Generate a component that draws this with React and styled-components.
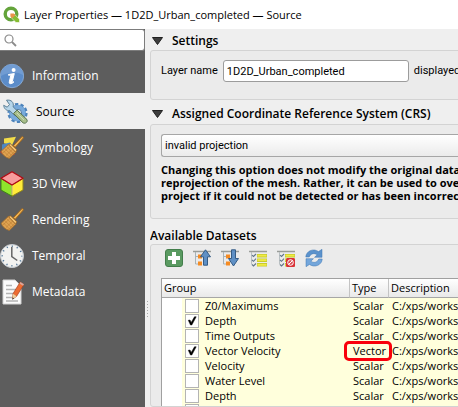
import React from "react";
import styled, { createGlobalStyle, css } from "styled-components";

const GlobalStyle = createGlobalStyle`
  *, *::before, *::after { box-sizing: border-box; }
  html, body { margin: 0; height: 100%; overflow: hidden; }
  body {
    background: #efefef;
    color: #000;
    font: 11px/16px "Open Sans", "Noto Sans", sans-serif;
  }
  svg { display: block; flex: none; }
`;

const Window = styled.div`
  display: flex;
  flex-direction: column;
  height: 100vh;
  overflow: hidden;
`;

const TitleBar = styled.header`
  display: flex;
  align-items: center;
  gap: 4px;
  flex: none;
  height: 29px;
  padding: 0 3px;
  background: #fff;
  white-space: nowrap;
`;

const Title = styled.h1`
  margin: 0;
  font-size: 11px;
  font-weight: 400;
`;

const Body = styled.div`
  display: grid;
  grid-template-columns: 145px 5px minmax(0, 1fr);
  flex: 1;
  min-height: 0;
`;

const Sidebar = styled.aside`
  background: #5d5d5d;
  overflow: hidden;
`;

const SearchBox = styled.label`
  display: flex;
  align-items: center;
  height: 22px;
  padding: 0 4px;
  gap: 4px;
  background: #fff;
  border: 1px solid #7c7c7c;
  border-left: 0;
  border-radius: 0 3px 3px 0;
`;

const SearchInput = styled.input`
  flex: 1;
  min-width: 0;
  padding: 0;
  border: 0;
  outline: 0;
  background: transparent;
  font: inherit;
`;

const Nav = styled.nav`
  display: flex;
  flex-direction: column;
  padding-top: 6px;
`;

const NavItem = styled.button`
  display: flex;
  align-items: center;
  gap: 8px;
  height: 36px;
  padding: 2px 0 0;
  border: 0;
  background: transparent;
  color: #fff;
  font: 12px/16px "Open Sans", "Noto Sans", sans-serif;
  text-align: left;
  ${(p) => p.$active && css`
    padding-left: 3px;
    background: #efefef;
    color: #000;
  `}
`;

const Splitter = styled.div`
  display: flex;
  flex-direction: column;
  align-items: center;
  justify-content: center;
  gap: 2px;
  padding-top: 182px;
`;

const Dot = styled.i`
  width: 1px;
  height: 1px;
  background: #a8a8a8;
`;

const Content = styled.main`
  display: flex;
  flex-direction: column;
  min-width: 0;
  overflow: hidden;
  white-space: nowrap;
`;

const SectionTitle = styled.h2`
  display: flex;
  align-items: center;
  gap: 9px;
  flex: none;
  height: ${(p) => p.$height}px;
  margin: 0;
  padding-left: ${(p) => (p.$plain ? 0 : 2)}px;
  padding-top: ${(p) => (p.$plain ? 8 : 3)}px;
  font-size: 12px;
  line-height: 16px;
  font-weight: 600;
`;

const Group = styled.section`
  flex: none;
  padding: ${(p) => p.$pad};
  margin-right: -8px;
  background: #ebebeb;
  border: 1px solid #d3d3d3;
  border-radius: 3px;
`;

const TableGroup = styled(Group)`
  display: flex;
  flex-direction: column;
  flex: 1;
  min-height: 0;
`;

const Field = styled.div`
  display: flex;
  align-items: center;
  gap: 5px;
  font: 11px/16px Roboto, "Open Sans", sans-serif;
`;

const TextInput = styled.input`
  flex: none;
  width: 186px;
  height: 22px;
  padding: 0 3px;
  border: 1px solid #9c9c9c;
  border-radius: 3px;
  background: #fff;
  font: 11px/16px Roboto, "Open Sans", sans-serif;
`;

const Select = styled.select`
  appearance: none;
  display: block;
  width: 100%;
  height: 23px;
  padding: 0 3px;
  border: 1px solid #a6a6a6;
  border-right: 0;
  border-radius: 3px 0 0 3px;
  background: linear-gradient(#fff, #ebebeb);
  color: #000;
  font: 11px/16px Roboto, "Open Sans", sans-serif;
`;

const Note = styled.p`
  margin: 6px 0 0;
  font-size: 11px;
  line-height: 13px;
  font-weight: 700;
`;

const Toolbar = styled.div`
  display: flex;
  gap: 10px;
  padding: 4px 4px 11px;
`;

const ToolButton = styled.button`
  width: 18px;
  height: 18px;
  padding: 0;
  border: 0;
  background: transparent;
`;

const TableFrame = styled.div`
  flex: 1;
  min-height: 0;
  overflow: hidden;
  background: #fff;
  border: 1px solid #a0a0a0;
  border-bottom: 0;
`;

const Table = styled.table`
  width: 100%;
  table-layout: fixed;
  border-collapse: separate;
  border-spacing: 0;
`;

const Col = styled.col`
  width: ${(p) => p.$width};
`;

const HeadCell = styled.th`
  height: 19px;
  padding: 0 2px;
  background: linear-gradient(#fff, #e9e9e9);
  border-bottom: 1px solid #a6a6a6;
  border-left: ${(p) => (p.$first ? "0" : "1px solid #c4c4c4")};
  font-weight: 400;
  line-height: 16px;
  text-align: left;
`;

const Cell = styled.td`
  position: relative;
  height: 15px;
  padding: 0 0 0 4px;
  background: #ffffdc;
  line-height: 15px;
`;

const Indent = styled.td`
  padding: 0;
  background: #fff;
`;

const CheckLabel = styled.label`
  display: flex;
  align-items: center;
  gap: 6px;
  height: 15px;
  margin-left: -1px;
`;

const CheckHolder = styled.span`
  display: grid;
  flex: none;
  > * { grid-area: 1 / 1; }
  > svg { pointer-events: none; }
`;

const Check = styled.input`
  appearance: none;
  width: 14px;
  height: 14px;
  margin: 0;
  background: #fff;
  border: 1px solid #b4b4b4;
`;

const RedMark = styled.span`
  position: absolute;
  inset: -2px -4px -3px -5px;
  z-index: 1;
  border: 3px solid #f9000c;
  border-radius: 5px;
  pointer-events: none;
`;

const QgisLogo = () => (
  <svg width="17" height="17" viewBox="0 0 17 17">
    <circle cx="8" cy="8" r="5.8" fill="none" stroke="#64a43b" strokeWidth="3.4" />
    <path d="M8 8h3.2l5.3 5.2v3.3h-3.6L8 11.4z" fill="#86bc32" stroke="#fff" strokeWidth=".6" />
    <path d="M7.4 7.4h3.4L12.6 9l-3.4 3.2-1.8-1.8z" fill="#e8924a" />
  </svg>
);

const SearchIcon = () => (
  <svg width="13" height="13" viewBox="0 0 13 13" fill="none" stroke="#8b8b8b">
    <circle cx="5" cy="5" r="4" strokeWidth="1.2" />
    <path d="M8 8l4 4" strokeWidth="1.8" />
  </svg>
);

const InfoIcon = () => (
  <svg width="24" height="26" viewBox="0 0 24 26">
    <circle cx="12" cy="13" r="11.7" fill="#5b8cc9" stroke="#8fb2dd" strokeWidth=".8" />
    <path d="M1 13a11 11 0 0122-1c-6-4-15-3-22 1z" fill="#719cd2" />
    <circle cx="13.6" cy="7" r="2" fill="#fff" />
    <path d="M8.5 11.5l5.8-1-2 8c-.3 1.2.4 1 1.7.2-1.4 2-5.3 3.1-4.7.2l1.4-6c.1-.8-.8-.7-2.2-.7z" fill="#fff" stroke="#fff" strokeWidth="1" />
  </svg>
);

const SourceIcon = () => (
  <svg width="25" height="26" viewBox="0 0 25 26">
    <circle cx="14.5" cy="14" r="8.6" fill="#78aadb" stroke="#4d83bb" strokeWidth="3" strokeDasharray="3.2 2.2" />
    <circle cx="14.5" cy="14" r="8" fill="#78aadb" />
    <circle cx="15" cy="14" r="3.6" fill="#e6eef5" stroke="#557ca1" />
    <path d="M3.5 1.2c5-.8 7.7 2.4 6.6 6.6l5.4 5.2-3.7 3.6-5.1-5C3.7 12 .9 9.7 .7 6.3l3.5 1.9 2.3-2.7z" fill="#b7d6ea" stroke="#5d8097" />
    <path d="M10.5 14.5l3.6-3.4L24 20.6c1 2.7-2 4.5-4 3.2z" fill="#a9bf8b" stroke="#55704c" />
    <path d="M14 14l7 7" stroke="#cddab5" />
  </svg>
);

const Brush = () => (
  <g>
    <path d="M13.4 10.7L22.2 1.4l1.3 1.4-8.3 9.5z" fill="#eeb254" stroke="#a4691c" />
    <path d="M8.3 9.6l2.3-.7 6 5.7-.9 2.7z" fill="#f6c674" stroke="#9d6522" strokeWidth=".8" />
    <path d="M8.3 9.6l7.4 7.7-6.5 6.1c-4.3-1.2-7-4-8-7.2z" fill="#dfa351" stroke="#a66d2a" strokeWidth=".8" />
    <path d="M3 15.5l7 7M5 13.8l6.5 6.6M7 12l6.5 6.8M3 18l7-6.7M6 20.5l7-6.7M8.3 22.5l6.4-6" stroke="#b7772f" strokeWidth=".5" />
  </g>
);

const SymbologyIcon = () => (
  <svg width="24" height="26" viewBox="0 0 24 26">
    <path d="M4 3.5l12-1.7-4 8.5-8-2z" fill="#f2dc49" />
    <path d="M2 9.5l8-2 3 5-11 3.3z" fill="#4c88c7" />
    <path d="M0 17l6-4 9 7-12-.5z" fill="#e53430" />
    <Brush />
  </svg>
);

const CubeIcon = () => (
  <svg width="24" height="26" viewBox="0 0 24 26" strokeLinejoin="round">
    <path d="M1 7.5l11 6.5v11.2L1 19z" fill="#8fe52c" stroke="#3d8417" />
    <path d="M23 7.5L12 14v11.2L23 19z" fill="#ffeb3a" stroke="#8f8419" />
    <path d="M12 .8l11 6.4L12 14 1 7.2z" fill="#f79c9c" stroke="#b10912" strokeWidth="1.3" />
    <path d="M12 14.5V24" stroke="#fff5b0" strokeWidth=".8" />
  </svg>
);

const RenderingIcon = () => (
  <svg width="24" height="26" viewBox="0 0 24 26"><Brush /></svg>
);

const ClockIcon = () => (
  <svg width="24" height="26" viewBox="0 0 24 26" fill="none">
    <circle cx="12" cy="13" r="11.5" fill="#f3f3f1" stroke="#c8ced4" />
    <circle cx="12" cy="13" r="9.8" stroke="#56799a" strokeWidth="1.6" strokeDasharray="1.2 3.93" strokeDashoffset=".6" />
    <path d="M11.8 4v9.5l5.5 4" stroke="#666" strokeWidth="1.5" />
  </svg>
);

const MetadataIcon = () => (
  <svg width="24" height="26" viewBox="0 0 24 26">
    <path d="M3 1h12l6 6v18H3z" fill="#fbfbfb" stroke="#d1d1d1" />
    <path d="M6 6.5h6M6 10.5h10M6 14.5h9M6 18.5h9M6 22h12" stroke="#b4b4b4" strokeWidth="1.4" />
    <path d="M20.2 3l3.7 2.5-7.3 11.8-3.9 2.6.3-5.2z" fill="#ed6c32" stroke="#a6411f" strokeWidth=".7" />
    <path d="M19.5 4.5l3.5 2.3 1-1.5L20.5 3z" fill="#d6a8a0" />
    <path d="M13 14.7l3.6 2.6-4 3z" fill="#ecd09b" />
    <path d="M12.7 18.5l1.4 1-1.8 1.2z" fill="#333" />
  </svg>
);

const Arrow = () => (
  <svg width="11" height="8" viewBox="0 0 11 8">
    <path d="M.5 .5h10L5.5 7.5z" fill="#3d3d3d" stroke="#202020" strokeLinejoin="round" />
  </svg>
);

const AddIcon = () => (
  <svg width="18" height="18" viewBox="0 0 18 18">
    <rect x=".5" y=".5" width="17" height="17" rx="2.5" fill="#5a9a61" stroke="#437e4b" />
    <path d="M9 3v12M3 9h12" stroke="#fff" strokeWidth="4" />
  </svg>
);

const TreeArrowIcon = ({ down }) => (
  <svg width="18" height="18" viewBox="0 0 18 18">
    <path d="M0 2.5h18" stroke="#999c98" strokeWidth="1.5" />
    <path d="M2.5 3v12H6M2.5 7.5H6" stroke="#a7b3b9" fill="none" />
    <path d="M5 5.5h4v4H5zM5 12.5h4v4H5z" fill="#f58b22" />
    <path d={down ? "M10.5 .8h4v8.7h3L12.5 17l-5-7.5h3z" : "M12.5 .8l5 7h-3v8.4h-4V7.8h-3z"} fill="#5f90c5" stroke="#355c85" strokeLinejoin="round" />
  </svg>
);

const ListIcon = ({ off }) => (
  <svg width="18" height="18" viewBox="0 0 18 18" fill="none">
    <path d="M0 2.5h18" stroke="#999c98" strokeWidth="1.5" />
    <path d="M2.5 3v12.5" stroke="#b8bfc2" />
    <path d="M3 6.2l1.5 1.3L7 5M3 11l1.5 1.3L7 9.7M3 15.5L4.5 17 7 14.5" stroke="#627689" strokeWidth="1.1" />
    <path d="M8 6.7h10M8 11.2h10M8 15.8h10" stroke="#c9cb2e" strokeWidth="3.4" />
    <path d="M8.5 6.7h9M8.5 11.2h9M8.5 15.8h9" stroke="#f0ec43" strokeWidth="1.8" />
    {off && (
      <g>
        <rect x="9" y="9" width="9" height="9" rx="1.5" fill="#da3038" />
        <circle cx="13.5" cy="13.5" r="2.8" stroke="#fff" fill="#d95358" />
        <path d="M11.5 15.5l4-4" stroke="#fff" />
      </g>
    )}
  </svg>
);

const RefreshIcon = () => (
  <svg width="18" height="18" viewBox="0 0 18 18">
    <path d="M.8 8C1 2 8.5-1.2 13.5 2.600L17 .3v8H9.500l2.700-2.500C9 3.600 5.800 4.600 4.200 8z" fill="#5b92cc" stroke="#3f76b3" strokeWidth=".5" />
    <path d="M17.200 10c-.2 6-7.700 9.200-12.700 5.400L1 17.700v-8h7.500l-2.700 2.500c3.200 2.200 6.400 1.200 8-2.200z" fill="#73a6db" stroke="#3f76b3" strokeWidth=".5" />
  </svg>
);

const CheckMark = () => (
  <svg width="14" height="14" viewBox="0 0 14 14">
    <path d="M3.3 6.3L5 6l1.2 2.4L9.5 2.8h1.7L6.8 11H5.5z" fill="#000" stroke="#000" strokeWidth=".5" />
  </svg>
);

const navItems = [
  ["Information", InfoIcon],
  ["Source", SourceIcon],
  ["Symbology", SymbologyIcon],
  ["3D View", CubeIcon],
  ["Rendering", RenderingIcon],
  ["Temporal", ClockIcon],
  ["Metadata", MetadataIcon],
];

const tools = [
  ["Add dataset", <AddIcon />],
  ["Collapse all", <TreeArrowIcon />],
  ["Expand all", <TreeArrowIcon down />],
  ["Check all", <ListIcon />],
  ["Uncheck all", <ListIcon off />],
  ["Reset", <RefreshIcon />],
];

const rows = [
  { name: "Z0/Maximums", type: "Scalar" },
  { name: "Depth", type: "Scalar", checked: true },
  { name: "Time Outputs", type: "Scalar" },
  { name: "Vector Velocity", type: "Vector", checked: true, marked: true },
  { name: "Velocity", type: "Scalar" },
  { name: "Water Level", type: "Scalar" },
  { name: "Depth", type: "Scalar" },
  { name: "Vector Velocity", type: "Vector" },
];

export default function App() {
  return (
    <Window>
      <GlobalStyle />
      <TitleBar>
        <QgisLogo />
        <Title>Layer Properties — 1D2D_Urban_completed — Source</Title>
      </TitleBar>
      <Body>
        <Sidebar>
          <SearchBox>
            <SearchIcon />
            <SearchInput type="search" aria-label="Search" />
          </SearchBox>
          <Nav>
            {navItems.map(([name, Icon]) => (
              <NavItem key={name} type="button" $active={name === "Source"}>
                <Icon />
                {name}
              </NavItem>
            ))}
          </Nav>
        </Sidebar>
        <Splitter>
          {[0, 1, 2, 3, 4, 5].map((n) => <Dot key={n} />)}
        </Splitter>
        <Content>
          <SectionTitle $height={21}><Arrow />Settings</SectionTitle>
          <Group $pad="9px 10px 17px">
            <Field>
              <label htmlFor="layer-name">Layer name</label>
              <TextInput id="layer-name" defaultValue="1D2D_Urban_completed" />
              <span>displayed</span>
            </Field>
          </Group>
          <SectionTitle $height={24}><Arrow />Assigned Coordinate Reference System (CRS)</SectionTitle>
          <Group $pad="9px 0 16px 10px">
            <Select aria-label="Coordinate reference system" defaultValue="invalid">
              <option value="invalid">invalid projection</option>
            </Select>
            <Note>
              Changing this option does not modify the original data
              <br />
              reprojection of the mesh. Rather, it can be used to override
              <br />
              project if it could not be detected or has been incorrectly
            </Note>
          </Group>
          <SectionTitle $height={25} $plain>Available Datasets</SectionTitle>
          <TableGroup $pad="0 0 0 10px">
            <Toolbar>
              {tools.map(([name, icon]) => (
                <ToolButton key={name} type="button" aria-label={name}>{icon}</ToolButton>
              ))}
            </Toolbar>
            <TableFrame>
              <Table>
                <colgroup>
                  <Col $width="20px" />
                  <Col $width="167px" />
                  <Col $width="39px" />
                  <Col $width="auto" />
                </colgroup>
                <thead>
                  <tr>
                    <HeadCell colSpan={2} $first>Group</HeadCell>
                    <HeadCell>Type</HeadCell>
                    <HeadCell>Description</HeadCell>
                  </tr>
                </thead>
                <tbody>
                  {rows.map((row, i) => (
                    <tr key={i}>
                      <Indent />
                      <Cell>
                        <CheckLabel>
                          <CheckHolder>
                            <Check type="checkbox" defaultChecked={row.checked} />
                            {row.checked && <CheckMark />}
                          </CheckHolder>
                          {row.name}
                        </CheckLabel>
                      </Cell>
                      <Cell>
                        {row.type}
                        {row.marked && <RedMark />}
                      </Cell>
                      <Cell>C:/xps/works</Cell>
                    </tr>
                  ))}
                </tbody>
              </Table>
            </TableFrame>
          </TableGroup>
        </Content>
      </Body>
    </Window>
  );
}
